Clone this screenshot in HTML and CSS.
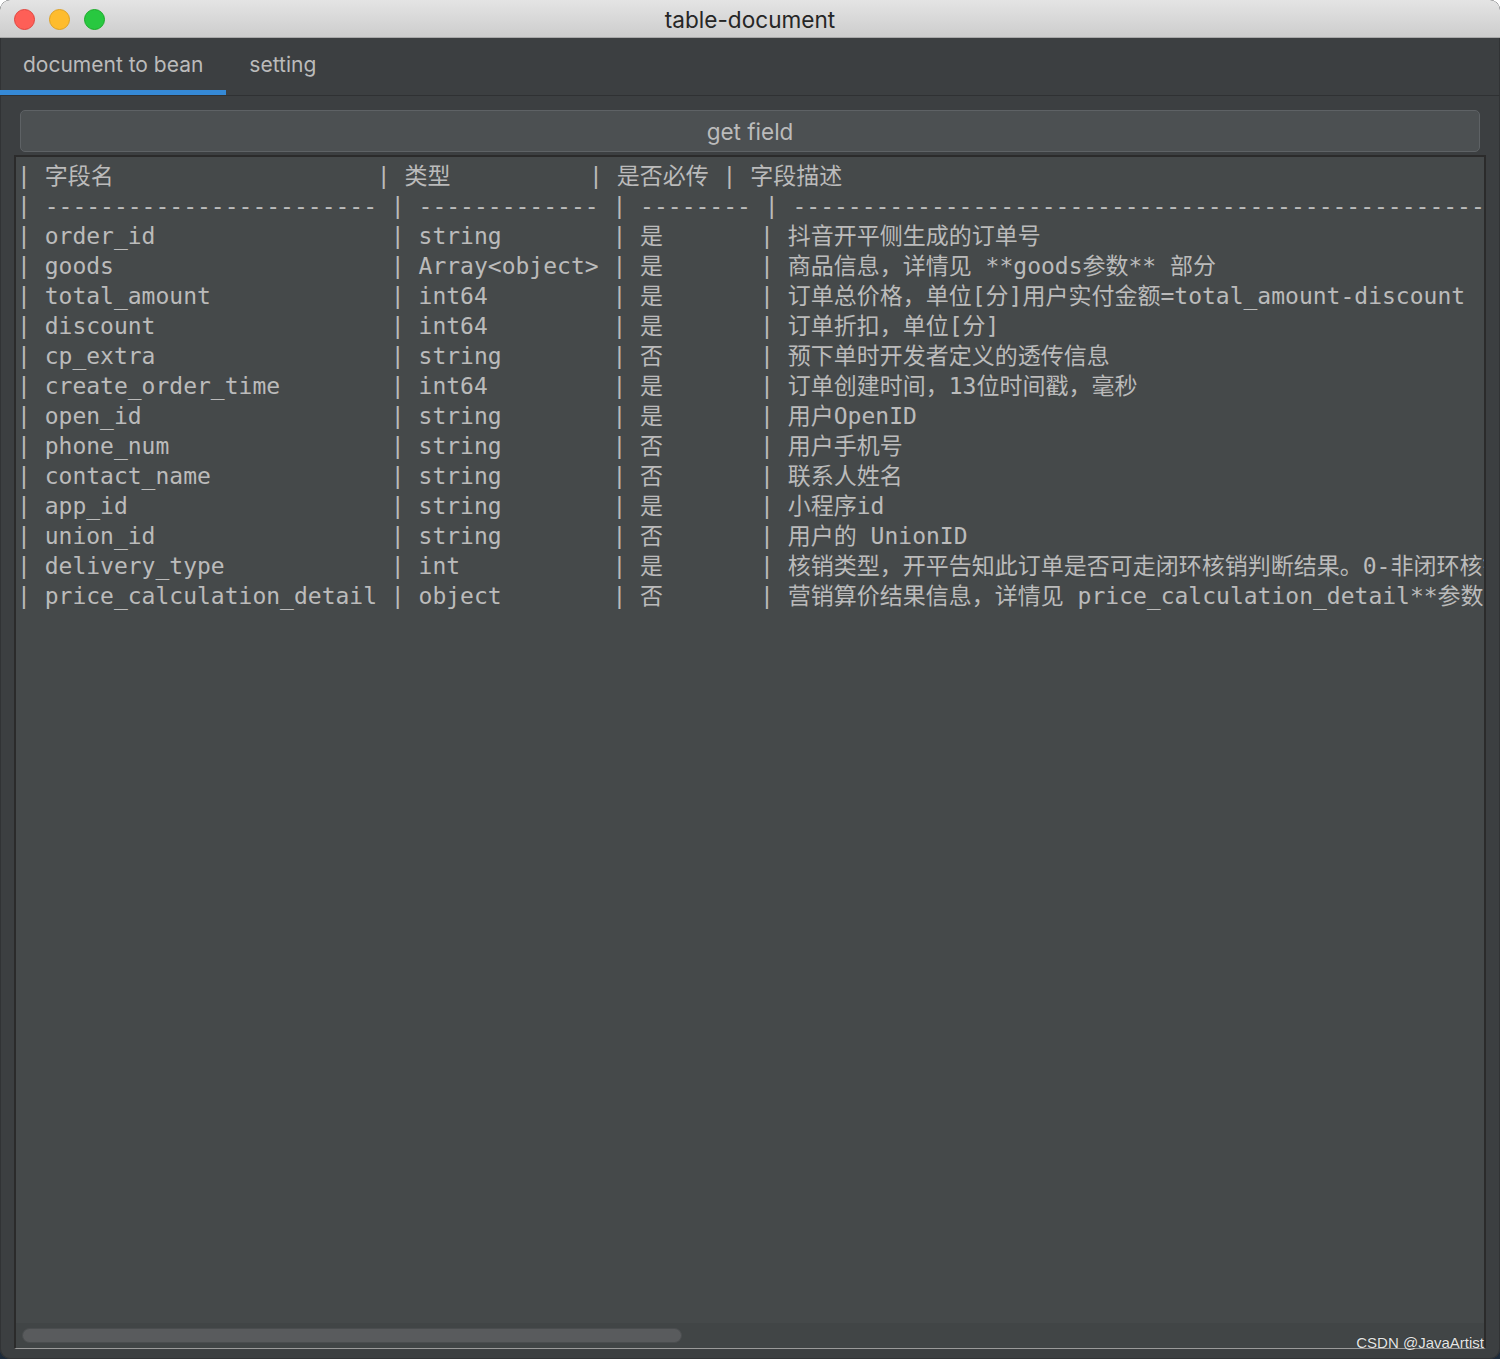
FILE: index.html
```html
<!DOCTYPE html>
<html lang="zh">
<head>
<meta charset="utf-8">
<title>table-document</title>
<link rel="stylesheet" href="styles.css">
</head>
<body>
<div class="window">
  <div class="titlebar">
    <div class="lights">
      <span class="light red"></span>
      <span class="light yellow"></span>
      <span class="light green"></span>
    </div>
    <div class="title">table-document</div>
  </div>
  <div class="tabs">
    <div class="tab active">document to bean</div>
    <div class="tab">setting</div>
  </div>
  <div class="content">
    <button class="btn">get field</button>
    <div class="textarea">
<pre class="doc">| 字段名                   | 类型          | 是否必传 | 字段描述
| ------------------------ | ------------- | -------- | ------------------------------------------------------------
| order_id                 | string        | 是       | 抖音开平侧生成的订单号
| goods                    | Array&lt;object&gt; | 是       | 商品信息，详情见 **goods参数** 部分
| total_amount             | int64         | 是       | 订单总价格，单位[分]用户实付金额=total_amount-discount
| discount                 | int64         | 是       | 订单折扣，单位[分]
| cp_extra                 | string        | 否       | 预下单时开发者定义的透传信息
| create_order_time        | int64         | 是       | 订单创建时间，13位时间戳，毫秒
| open_id                  | string        | 是       | 用户OpenID
| phone_num                | string        | 否       | 用户手机号
| contact_name             | string        | 否       | 联系人姓名
| app_id                   | string        | 是       | 小程序id
| union_id                 | string        | 否       | 用户的 UnionID
| delivery_type            | int           | 是       | 核销类型，开平告知此订单是否可走闭环核销判断结果。0-非闭环核销，1-闭环核销
| price_calculation_detail | object        | 否       | 营销算价结果信息，详情见 price_calculation_detail**参数** 部分</pre>
      <div class="hscroll"><div class="thumb"></div></div>
    </div>
  </div>
  <div class="watermark">CSDN @JavaArtist</div>
</div>
</body>
</html>
```
FILE: styles.css
```css
html, body {
  margin: 0;
  padding: 0;
}
body {
  width: 1500px;
  height: 1359px;
  overflow: hidden;
  background: linear-gradient(to bottom, #ffffff 0, #ffffff 50%, #1c2a3a 50%, #1c2a3a 100%);
}
.window {
  position: relative;
  width: 1500px;
  height: 1359px;
  box-sizing: border-box;
  background: #3c3f41;
  border-radius: 10px;
  overflow: hidden;
  display: flex;
  flex-direction: column;
  box-shadow: inset 0 0 0 1px #313335;
}
.titlebar {
  position: relative;
  height: 37px;
  flex: none;
  background: linear-gradient(to bottom, #e4e4e4, #cdcdcd);
  border-bottom: 1px solid #a9a9a9;
  display: flex;
  align-items: center;
  justify-content: center;
}
.lights {
  position: absolute;
  left: 14px;
  top: 9px;
  display: flex;
  gap: 14px;
}
.light {
  width: 21px;
  height: 21px;
  border-radius: 50%;
  box-sizing: border-box;
}
.red { background: #fe5f57; border: 1px solid #e0443e; }
.yellow { background: #febc2e; border: 1px solid #dea123; }
.green { background: #28c840; border: 1px solid #1aab29; }
.title {
  font-family: Inter, "Liberation Sans", sans-serif;
  font-size: 22.6px;
  color: #262626;
  line-height: 38px;
  margin-top: 2px;
}
.tabs {
  display: flex;
  height: 57px;
  flex: none;
  border-bottom: 1px solid #2f3133;
}
.tab {
  height: 52px;
  line-height: 54px;
  padding: 0 23px;
  border-bottom: 5px solid transparent;
  font-family: Inter, "Liberation Sans", sans-serif;
  font-size: 21px;
  color: #bbbbbb;
}
.tab.active {
  border-bottom-color: #3589d6;
}
.content {
  flex: 1;
  display: flex;
  flex-direction: column;
  padding: 14px 0 10px;
  min-height: 0;
}
.btn {
  margin: 0 20px;
  height: 42px;
  flex: none;
  background: #4c5052;
  border: 1px solid #5e6265;
  border-radius: 5px;
  font-family: Inter, "Liberation Sans", sans-serif;
  font-size: 22.5px;
  color: #bbbbbb;
  padding: 0;
}
.textarea {
  flex: 1;
  margin: 3px 14px 0;
  min-height: 0;
  display: flex;
  flex-direction: column;
  background: #45494a;
  border-top: 2px solid #2b2b2b;
  border-left: 2px solid #2b2b2b;
  border-right: 2px solid #2b2b2b;
  border-bottom: 1px solid #9a9a9a;
}
.doc {
  flex: 1;
  margin: 0;
  padding: 4px 0 0 1px;
  overflow: hidden;
  white-space: pre;
  font-family: "DejaVu Sans Mono", "Noto Sans CJK SC", monospace;
  font-size: 23px;
  line-height: 30px;
  color: #bbbbbb;
}
.hscroll {
  height: 25px;
  flex: none;
  background: #414546;
  padding: 5px 0 0 6px;
  box-sizing: border-box;
}
.thumb {
  width: 660px;
  height: 15px;
  box-sizing: border-box;
  background: #595b5d;
  border: 1px solid #4a4d4f;
  border-radius: 8px;
}
.watermark {
  position: absolute;
  right: 16px;
  bottom: 8px;
  font-family: "Liberation Sans", Arial, sans-serif;
  font-size: 15px;
  line-height: 17px;
  color: #e6e6e6;
  text-shadow: 0 0 1px rgba(0, 0, 0, 0.6);
}
```
